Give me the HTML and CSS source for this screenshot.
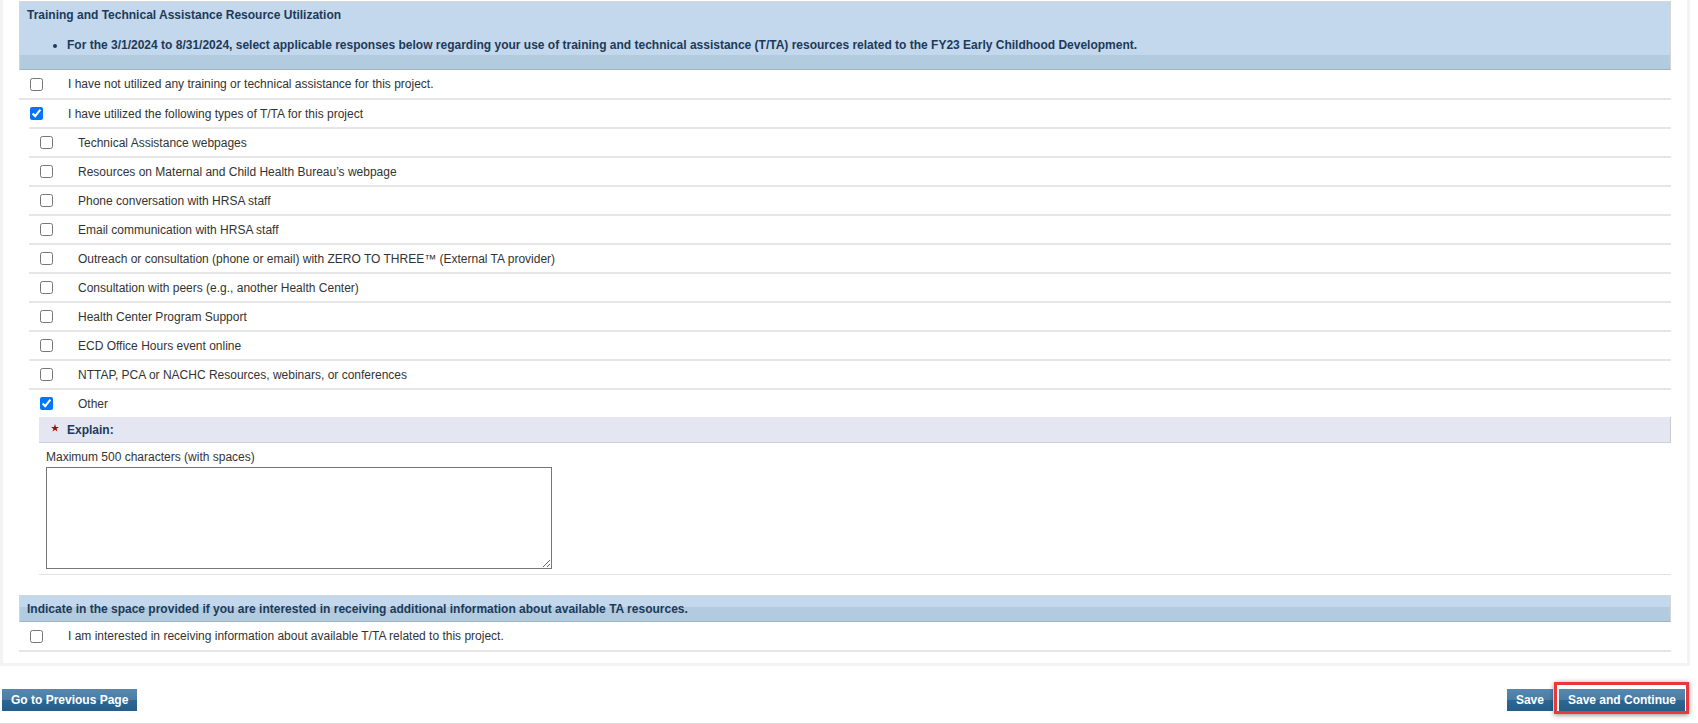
FILE: index.html
```html
<!DOCTYPE html>
<html lang="en">
<head>
    <meta charset="UTF-8">
    <title>Training and Technical Assistance Resource Utilization</title>
    <link rel="stylesheet" href="styles.css">
</head>
<body>
<div class="panel">
    <div class="section-head">
        <div class="section-title">Training and Technical Assistance Resource Utilization</div>
        <ul class="section-notes">
            <li>For the 3/1/2024 to 8/31/2024, select applicable responses below regarding your use of training and technical assistance (T/TA) resources related to the FY23 Early Childhood Development.</li>
        </ul>
    </div>

    <ul class="options">
        <li class="first">
            <label class="opt"><input type="checkbox"> I have not utilized any training or technical assistance for this project.</label>
        </li>
        <li>
            <label class="opt"><input type="checkbox" checked> I have utilized the following types of T/TA for this project</label>
            <ul class="sub-options">
                <li><label class="opt"><input type="checkbox"> Technical Assistance webpages</label></li>
                <li><label class="opt"><input type="checkbox"> Resources on Maternal and Child Health Bureau’s webpage</label></li>
                <li><label class="opt"><input type="checkbox"> Phone conversation with HRSA staff</label></li>
                <li><label class="opt"><input type="checkbox"> Email communication with HRSA staff</label></li>
                <li><label class="opt"><input type="checkbox"> Outreach or consultation (phone or email) with ZERO TO THREE™ (External TA provider)</label></li>
                <li><label class="opt"><input type="checkbox"> Consultation with peers (e.g., another Health Center)</label></li>
                <li><label class="opt"><input type="checkbox"> Health Center Program Support</label></li>
                <li><label class="opt"><input type="checkbox"> ECD Office Hours event online</label></li>
                <li><label class="opt"><input type="checkbox"> NTTAP, PCA or NACHC Resources, webinars, or conferences</label></li>
                <li>
                    <label class="opt"><input type="checkbox" checked> Other</label>
                    <div class="explain">
                        <div class="explain-head">
                            <svg class="req" width="8" height="8" viewBox="0 0 10 10"><polygon points="5,0 6.2,3.6 10,3.6 6.9,5.8 8.1,9.5 5,7.2 1.9,9.5 3.1,5.8 0,3.6 3.8,3.6" fill="#b30000"/></svg>
                            Explain:
                        </div>
                        <div class="explain-body">
                            <div class="hint">Maximum 500 characters (with spaces)</div>
                            <textarea maxlength="500"></textarea>
                        </div>
                    </div>
                </li>
            </ul>
        </li>
    </ul>

    <div class="section-head small">
        <div class="section-title">Indicate in the space provided if you are interested in receiving additional information about available TA resources.</div>
    </div>
    <ul class="options">
        <li class="first">
            <label class="opt"><input type="checkbox"> I am interested in receiving information about available T/TA related to this project.</label>
        </li>
    </ul>
</div>

<div class="footer">
    <button class="btn">Go to Previous Page</button>
    <div class="footer-right">
        <button class="btn">Save</button>
        <span class="highlight"><button class="btn">Save and Continue</button></span>
    </div>
</div>
</body>
</html>
```

FILE: styles.css
```css
body {
    margin: 0;
    padding: 0;
    font-family: "Liberation Sans", Arial, sans-serif;
    font-size: 12px;
    line-height: 14px;
    color: #333;
    background-color: #fff;
}

.panel {
    width: 1690px;
    box-sizing: border-box;
    border: 3px solid #f3f3f3;
    border-top: 0;
    padding: 1px 16px 11px 16px;
    background-color: #fff;
}

.section-head {
    border: 1px solid #d6d6d6;
    border-bottom: 1px solid #9db5c8;
    background: linear-gradient(to bottom, #c3d8ec calc(100% - 14px), #b2cbdf calc(100% - 14px));
    color: #1d3a5a;
    font-weight: bold;
    padding: 6px 7px 17px 7px;
}

.section-head.small {
    margin-top: 20px;
    padding: 6px 7px 5px 7px;
}

.section-notes {
    margin: 16px 0 0 0;
    padding-left: 40px;
}

ul.options,
ul.sub-options {
    list-style-type: none;
    margin: 0;
    padding: 0;
}

.options > li.first {
    border-bottom: 2px solid #e6e6e6;
}

.options > li.first .opt {
    height: 28px;
}

.sub-options {
    margin-left: 10px !important;
}

.sub-options > li {
    border-top: 2px solid #e6e6e6;
}

.opt {
    display: flex;
    align-items: center;
    height: 27px;
    padding-left: 11px;
    cursor: pointer;
}

.opt input {
    width: 13px;
    height: 13px;
    margin: 0 25px 0 0;
}

.explain {
    margin-left: 10px;
    border-bottom: 1px solid #e2e2e2;
}

.explain-head {
    display: flex;
    align-items: center;
    height: 25px;
    padding-left: 12px;
    background-color: #e4e7f1;
    border-right: 1px solid #c9ccd6;
    border-bottom: 1px solid #cdd0dc;
    color: #1d3a5a;
    font-weight: bold;
}

.req {
    margin-right: 8px;
    margin-top: -3px;
}

.explain-body {
    padding: 7px 7px 5px 7px;
}

.hint {
    margin-bottom: 3px;
}

textarea {
    display: block;
    width: 506px;
    height: 102px;
    box-sizing: border-box;
    border: 1px solid #767676;
    margin: 0;
    padding: 2px;
    font-family: "Liberation Sans", Arial, sans-serif;
    font-size: 12px;
}

.footer {
    display: flex;
    justify-content: space-between;
    align-items: flex-start;
    margin-top: 23px;
    padding: 0 13px 12px 2px;
    border-bottom: 3px solid #d9d9d9;
}

.footer-right {
    display: flex;
    gap: 6px;
}

.btn {
    height: 22px;
    padding: 0 9px;
    border: 0;
    border-radius: 0;
    background: linear-gradient(to bottom, #5587af 0%, #4a7ca4 50%, #2d6793 50%, #255d8a 100%);
    color: #fff;
    font-family: "Liberation Sans", Arial, sans-serif;
    font-size: 12px;
    font-weight: bold;
    cursor: pointer;
}

.highlight {
    position: relative;
    display: inline-block;
}

.highlight::after {
    content: "";
    position: absolute;
    left: -5px;
    right: -4px;
    top: -7px;
    bottom: -3px;
    border: 3px solid #e8383e;
    box-shadow: 0 1px 5px rgba(0, 0, 0, 0.45);
    pointer-events: none;
}
```
